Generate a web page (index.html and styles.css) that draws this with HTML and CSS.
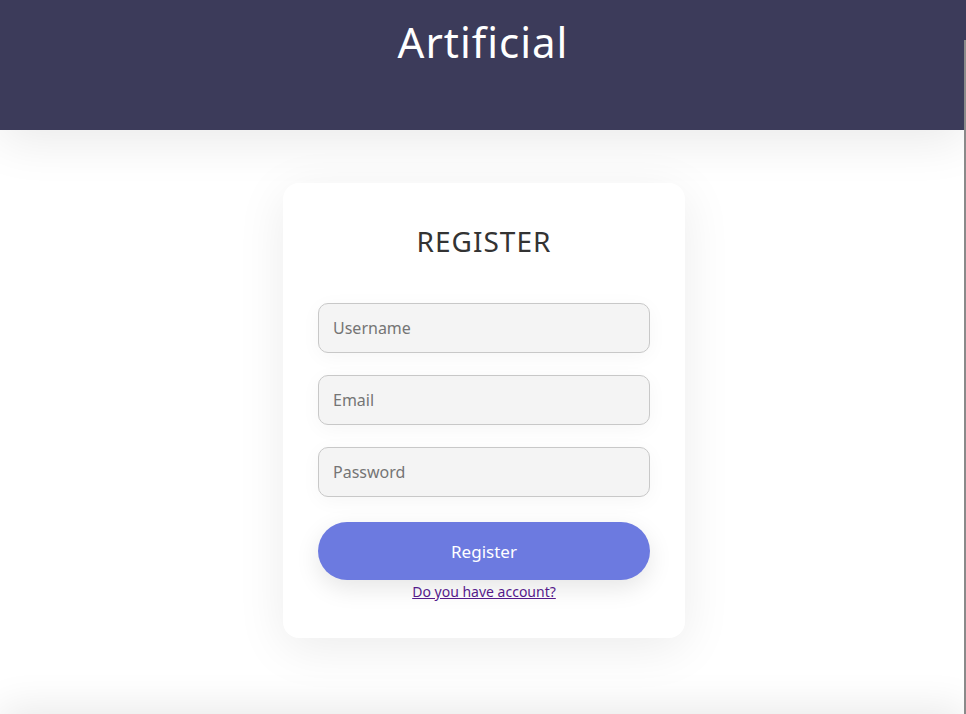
FILE: index.html
```html
<!DOCTYPE html>
<html lang="en">
<head>
<meta charset="utf-8">
<title>Artificial</title>
<link rel="stylesheet" href="styles.css">
</head>
<body>
<header class="topbar">
  <h1 class="brand">Artificial</h1>
</header>
<main class="main">
  <form class="card">
    <h2 class="card-title">REGISTER</h2>
    <div class="fields">
      <input class="field" type="text" placeholder="Username">
      <input class="field" type="email" placeholder="Email">
      <input class="field" type="password" placeholder="Password">
    </div>
    <button class="submit" type="button">Register</button>
    <a class="login-link" href="#">Do you have account?</a>
  </form>
</main>
<footer class="footer"></footer>
<div class="edge-line"></div>
</body>
</html>
```

FILE: styles.css
```css
* { box-sizing: border-box; }

html, body {
  margin: 0;
  padding: 0;
  background: #ffffff;
  font-family: "Noto Sans", "Open Sans", sans-serif;
}

.topbar {
  position: relative;
  z-index: 2;
  height: 130px;
  background: #3c3b5a;
  box-shadow: 0 10px 50px rgba(0, 0, 0, 0.09);
  padding-top: 15px;
}

.brand {
  margin: 0;
  text-align: center;
  color: #ffffff;
  font-size: 42px;
  font-weight: 400;
  letter-spacing: 1px;
  line-height: 54px;
}

.main {
  height: 584px;
  display: flex;
  justify-content: center;
  align-items: flex-start;
  padding: 53px 0 0 2px;
}

.card {
  width: 402px;
  height: 455px;
  background: #ffffff;
  border-radius: 16px;
  box-shadow: 0 10px 50px rgba(0, 0, 0, 0.08);
  padding: 39px 35px 0;
  display: flex;
  flex-direction: column;
  align-items: stretch;
}

.card-title {
  margin: 0;
  text-align: center;
  color: #333333;
  font-size: 28px;
  font-weight: 400;
  letter-spacing: 1px;
  line-height: 38px;
}

.fields {
  display: flex;
  flex-direction: column;
  gap: 22px;
  margin-top: 43px;
}

.field {
  height: 50px;
  width: 100%;
  border: 1px solid #c8c8c8;
  border-radius: 10px;
  background: #f4f4f4;
  padding: 0 14px;
  font-family: inherit;
  font-size: 16px;
  color: #333;
  outline: none;
  box-shadow: 0 4px 20px rgba(0, 0, 0, 0.04);
}

.field::placeholder {
  color: #757575;
}

.submit {
  margin-top: 25px;
  height: 58px;
  width: 100%;
  border: none;
  border-radius: 29px;
  background: #6c7ae0;
  color: #ffffff;
  font-family: inherit;
  font-size: 17px;
  box-shadow: 0 8px 24px rgba(0, 0, 0, 0.1);
  cursor: pointer;
}

.login-link {
  align-self: center;
  margin-top: 2px;
  font-size: 14px;
  line-height: 19px;
  color: #551a8b;
  text-decoration: underline;
}

.footer {
  height: 60px;
  background: #ffffff;
  box-shadow: 0 -6px 40px rgba(0, 0, 0, 0.09);
}

.edge-line {
  position: fixed;
  right: 0;
  top: 40px;
  bottom: 0;
  width: 2px;
  background: #8a8a8a;
  z-index: 5;
}
```
